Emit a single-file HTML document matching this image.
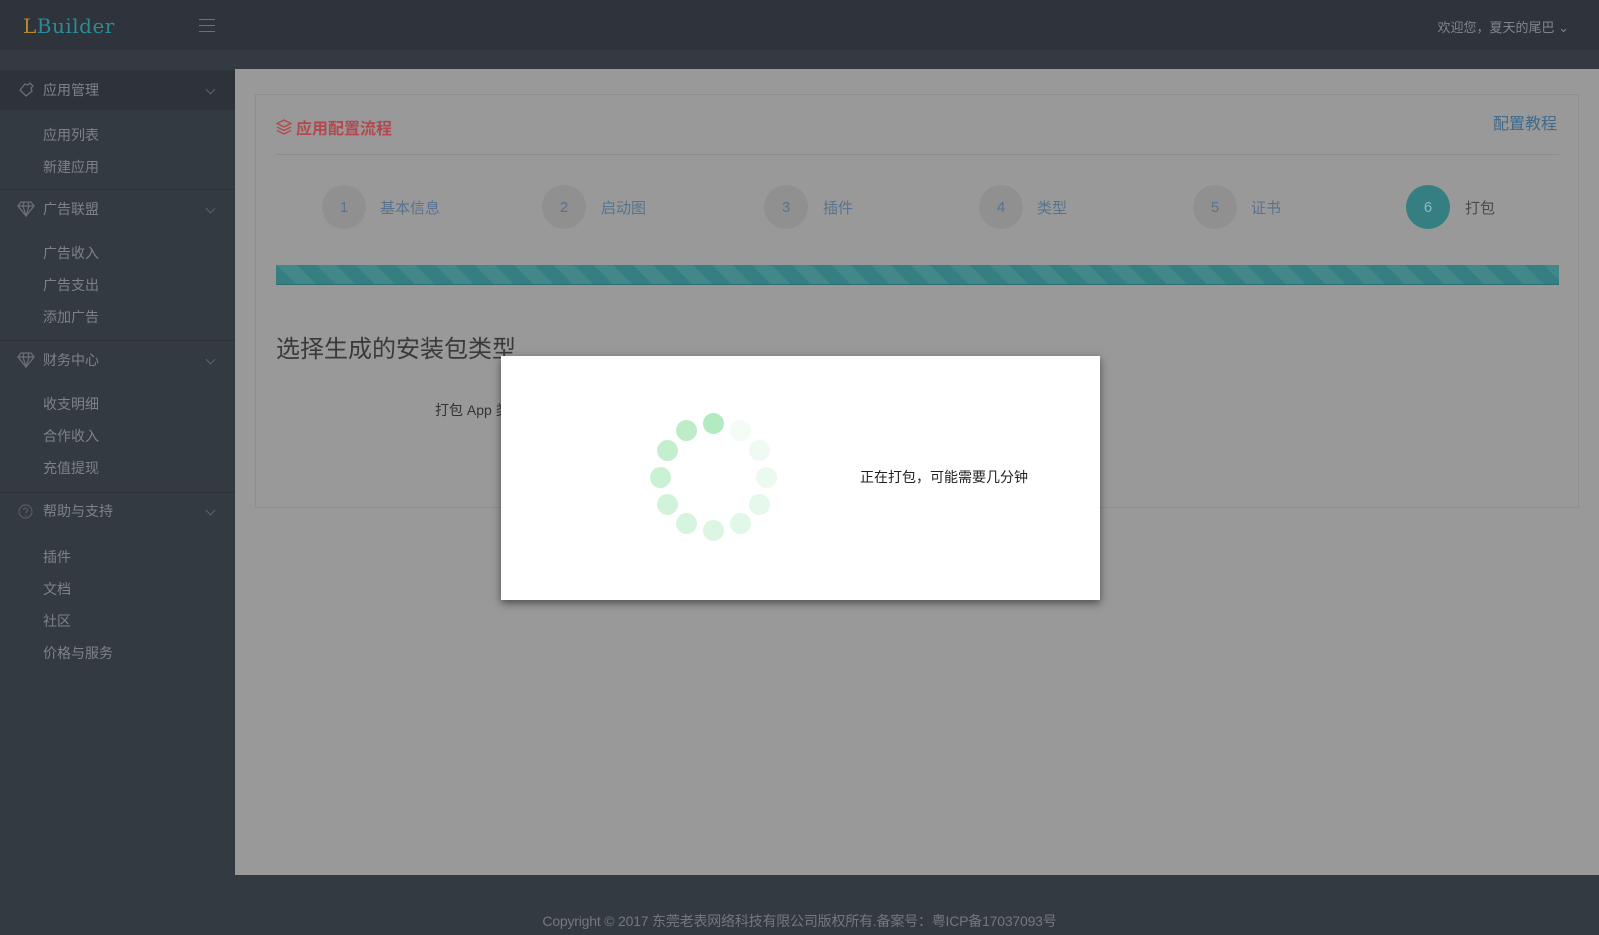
<!DOCTYPE html>
<html><head><meta charset="utf-8"><style>
*{margin:0;padding:0;box-sizing:border-box}
body{width:1599px;height:935px;overflow:hidden;background:#343a42;font-family:"Liberation Sans","Noto Sans CJK SC",sans-serif;position:relative}
.abs{position:absolute}
.hdr{left:0;top:0;width:1599px;height:50px;background:#2f333b}
.logo{left:23px;top:14px;font-family:"DejaVu Serif","Liberation Serif",serif;font-size:20px;color:#2b8c97;letter-spacing:0.5px}
.logo span{color:#b5892c}
.burger{left:199px;top:19px;width:16px}
.burger i{display:block;height:1px;background:#6d727a;margin-bottom:5px}
.user{right:30px;top:17px;font-size:13px;color:#80858c}
.side{font-size:14px;color:#7d828a}
.grp{left:0;width:235px;height:40px;line-height:40px;padding-left:43px}
.sep{left:0;width:235px;height:1px;background:#2d3239}
.chev{left:207px;width:7px;height:7px;border-right:1px solid #5d626a;border-bottom:1px solid #5d626a;transform:rotate(45deg)}
.item{left:43px}
.main{left:235px;top:69px;width:1364px;height:806px;background:#999}
.panel{left:255px;top:94px;width:1324px;height:414px;border:1px solid #8e8e8e}
.step{width:44px;height:44px;border-radius:50%;background:#909090;color:#587390;text-align:center;line-height:46px;font-size:15px;top:185px}
.lab{top:197px;font-size:15px;color:#587390}
.bar{left:276px;top:265px;width:1283px;height:20px;background:repeating-linear-gradient(45deg,#357f82 0 14px,#44878a 14px 28px);border-bottom:1px solid #2d6e71}
.modal{left:501px;top:356px;width:599px;height:244px;background:#fff;box-shadow:0 3px 8px rgba(0,0,0,.5)}
.dot{width:21px;height:21px;border-radius:50%;background:#b5ecc3}
.foot{left:0;top:911px;width:1599px;text-align:center;font-size:14px;color:#73787f;letter-spacing:-0.2px}
</style></head><body>
<div class="abs hdr"></div>
<div class="abs logo"><span>L</span>Builder</div>
<div class="abs burger"><i></i><i></i><i></i></div>
<div class="abs user">欢迎您，夏天的尾巴 ⌄</div>

<div class="side">
<div class="abs grp" style="top:70px;background:#2e3239">应用管理</div>
<svg class="abs" style="left:18px;top:81px" width="17" height="17" viewBox="0 0 17 17" fill="none" stroke="#6a6f77" stroke-width="1.3"><path d="M2 9l5-6 3 1 2-2 3 3-2 2 1 3-6 5z"/></svg>
<div class="abs chev" style="top:86px"></div>
<div class="abs item" style="top:125px">应用列表</div>
<div class="abs item" style="top:157px">新建应用</div>
<div class="abs sep" style="top:189px"></div>
<div class="abs grp" style="top:189px">广告联盟</div>
<svg class="abs" style="left:17px;top:201px" width="18" height="16" viewBox="0 0 18 16" fill="none" stroke="#6a6f77" stroke-width="1.3"><path d="M4 1h10l3 4-8 10-8-10zM1 5h16M6 5l3 10 3-10M7 1l-1 4M11 1l1 4"/></svg>
<div class="abs chev" style="top:205px"></div>
<div class="abs item" style="top:243px">广告收入</div>
<div class="abs item" style="top:275px">广告支出</div>
<div class="abs item" style="top:307px">添加广告</div>
<div class="abs sep" style="top:340px"></div>
<div class="abs grp" style="top:340px">财务中心</div>
<svg class="abs" style="left:17px;top:352px" width="18" height="16" viewBox="0 0 18 16" fill="none" stroke="#6a6f77" stroke-width="1.3"><path d="M4 1h10l3 4-8 10-8-10zM1 5h16M6 5l3 10 3-10M7 1l-1 4M11 1l1 4"/></svg>
<div class="abs chev" style="top:356px"></div>
<div class="abs item" style="top:394px">收支明细</div>
<div class="abs item" style="top:426px">合作收入</div>
<div class="abs item" style="top:458px">充值提现</div>
<div class="abs sep" style="top:492px"></div>
<div class="abs grp" style="top:491px">帮助与支持</div>
<svg class="abs" style="left:18px;top:504px" width="15" height="15" viewBox="0 0 15 15" fill="none" stroke="#555a62" stroke-width="1.2"><circle cx="7.5" cy="7.5" r="6.5"/><path d="M5.5 6a2 2 0 1 1 2.5 2v1.5M7.8 11v1"/></svg>
<div class="abs chev" style="top:507px"></div>
<div class="abs item" style="top:547px">插件</div>
<div class="abs item" style="top:579px">文档</div>
<div class="abs item" style="top:611px">社区</div>
<div class="abs item" style="top:643px">价格与服务</div>
</div>

<div class="abs main"></div>
<div class="abs panel"></div>
<svg class="abs" style="left:276px;top:119px" width="16" height="16" viewBox="0 0 16 16" fill="none" stroke="#b4484f" stroke-width="1.3"><path d="M8 1l7 3.5-7 3.5-7-3.5zM1 8l7 3.5 7-3.5M1 11.5l7 3.5 7-3.5"/></svg>
<div class="abs" style="left:296px;top:115px;font-size:16px;font-weight:bold;color:#b4484f">应用配置流程</div>
<div class="abs" style="left:1493px;top:110px;font-size:16px;color:#3f6a8c">配置教程</div>
<div class="abs" style="left:276px;top:154px;width:1283px;height:1px;background:#8c8c8c"></div>

<div class="abs step" style="left:322px">1</div><div class="abs lab" style="left:380px">基本信息</div>
<div class="abs step" style="left:542px">2</div><div class="abs lab" style="left:601px">启动图</div>
<div class="abs step" style="left:764px">3</div><div class="abs lab" style="left:823px">插件</div>
<div class="abs step" style="left:979px">4</div><div class="abs lab" style="left:1037px">类型</div>
<div class="abs step" style="left:1193px">5</div><div class="abs lab" style="left:1251px">证书</div>
<div class="abs step" style="left:1406px;background:#357f82;color:#8fb9bb">6</div><div class="abs lab" style="left:1465px;color:#4a4a4a">打包</div>
<div class="abs bar"></div>
<div class="abs" style="left:276px;top:329px;font-size:24px;color:#3a3a3a">选择生成的安装包类型</div>
<div class="abs" style="left:435px;top:400px;font-size:14px;color:#333">打包 App 类</div>

<div class="abs modal">
<div class="abs dot" style="left:202px;top:57px;background:#b3ebc1"></div>
<div class="abs dot" style="left:229px;top:64px;background:#f4fcf6"></div>
<div class="abs dot" style="left:248px;top:84px;background:#effbf2"></div>
<div class="abs dot" style="left:255px;top:111px;background:#ebfaef"></div>
<div class="abs dot" style="left:248px;top:138px;background:#e6f8eb"></div>
<div class="abs dot" style="left:229px;top:157px;background:#e1f7e7"></div>
<div class="abs dot" style="left:202px;top:164px;background:#dcf6e3"></div>
<div class="abs dot" style="left:175px;top:157px;background:#d6f4de"></div>
<div class="abs dot" style="left:156px;top:138px;background:#d1f3da"></div>
<div class="abs dot" style="left:149px;top:111px;background:#c9f1d4"></div>
<div class="abs dot" style="left:156px;top:84px;background:#c3efce"></div>
<div class="abs dot" style="left:175px;top:64px;background:#bcedc8"></div>
<div class="abs" style="left:359px;top:111px;font-size:14px;color:#222">正在打包，可能需要几分钟</div>
</div>

<div class="abs foot">Copyright © 2017 东莞老表网络科技有限公司版权所有.备案号：粤ICP备17037093号</div>
</body></html>
